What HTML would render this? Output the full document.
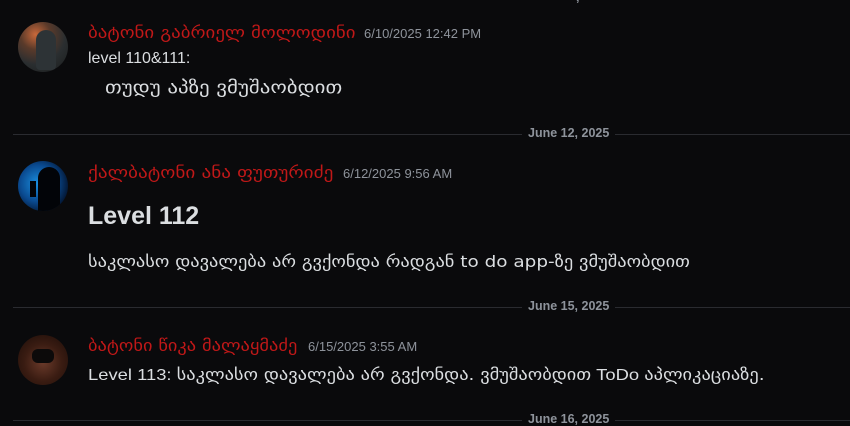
<!DOCTYPE html>
<html><head><meta charset="utf-8"><style>
body{margin:0;width:850px;height:422px;background:#0a0a0c;overflow:hidden;position:relative;font-family:"Liberation Sans","DejaVu Sans",sans-serif;}
.a{position:absolute;white-space:nowrap;transform-origin:0 50%;}
.av{position:absolute;left:18px;width:50px;height:50px;border-radius:50%;overflow:hidden;}
.name{color:#c01818;font-size:16px;font-family:"DejaVu Sans",sans-serif;}
.ts{color:#8e939b;font-size:13px;}
.txt{color:#dbdee1;font-size:16px;}
.div{position:absolute;left:13px;right:0;height:1px;background:#2a2b30;}
.dl{position:absolute;background:#0a0a0c;color:#8e939b;font-size:12.5px;font-weight:bold;padding:0 6px;}
</style></head><body>
<div class="dl" style="left:570px;top:-10px;">,</div>

<div class="av" style="top:22px;background:radial-gradient(circle at 35% 25%,#c9683a 0%,#5a3a2a 30%,#2a2e30 60%,#1a1c1c 100%);"><div style="position:absolute;left:18px;top:8px;width:20px;height:40px;background:#2d3336;border-radius:10px 10px 4px 4px;"></div></div>
<div class="a name" style="left:88px;top:23px;transform:scaleX(1.18);">ბატონი გაბრიელ მოლოდინი</div>
<div class="a ts" style="left:364px;top:26px;">6/10/2025 12:42 PM</div>
<div class="a txt" style="left:88px;top:50px;">level 110&amp;111:</div>
<div class="a txt" style="left:105px;top:78px;font-family:'DejaVu Sans',sans-serif;font-size:17px;transform:scaleX(1.23);">თუდუ აპზე ვმუშაობდით</div>

<div class="div" style="top:134px;"></div>
<div class="dl" style="left:522px;top:126px;">June 12, 2025</div>

<div class="av" style="top:161px;background:radial-gradient(circle at 40% 45%,#1a8fe0 0%,#0a4a90 45%,#021028 80%);"><div style="position:absolute;left:20px;top:6px;width:22px;height:46px;background:#020408;border-radius:11px 11px 0 0;"></div><div style="position:absolute;left:12px;top:20px;width:6px;height:16px;background:#020408;"></div></div>
<div class="a name" style="left:88px;top:163px;transform:scaleX(1.2);">ქალბატონი ანა ფუთურიძე</div>
<div class="a ts" style="left:343px;top:166px;">6/12/2025 9:56 AM</div>
<div class="a txt" style="left:88px;top:202px;font-size:25px;font-weight:bold;">Level 112</div>
<div class="a txt" style="left:88px;top:252px;font-size:16px;font-family:'DejaVu Sans','Liberation Sans',sans-serif;transform:scaleX(1.15);">საკლასო დავალება არ გვქონდა რადგან to do app-ზე ვმუშაობდით</div>

<div class="div" style="top:307px;"></div>
<div class="dl" style="left:522px;top:299px;">June 15, 2025</div>

<div class="av" style="top:335px;background:radial-gradient(circle at 50% 55%,#6a3a2a 0%,#3a1c12 50%,#1a0c08 100%);"><div style="position:absolute;left:14px;top:14px;width:22px;height:14px;background:#0c0a0a;border-radius:6px;"></div></div>
<div class="a name" style="left:88px;top:336px;transform:scaleX(1.15);">ბატონი წიკა მალაყმაძე</div>
<div class="a ts" style="left:308px;top:339px;">6/15/2025 3:55 AM</div>
<div class="a txt" style="left:88px;top:365px;font-size:16px;transform:scaleX(1.15);">Level 113: <span style="font-family:'DejaVu Sans',sans-serif;">საკლასო დავალება არ გვქონდა. ვმუშაობდით</span> ToDo <span style="font-family:'DejaVu Sans',sans-serif;">აპლიკაციაზე.</span></div>

<div class="div" style="top:420px;"></div>
<div class="dl" style="left:522px;top:412px;">June 16, 2025</div>
</body></html>
